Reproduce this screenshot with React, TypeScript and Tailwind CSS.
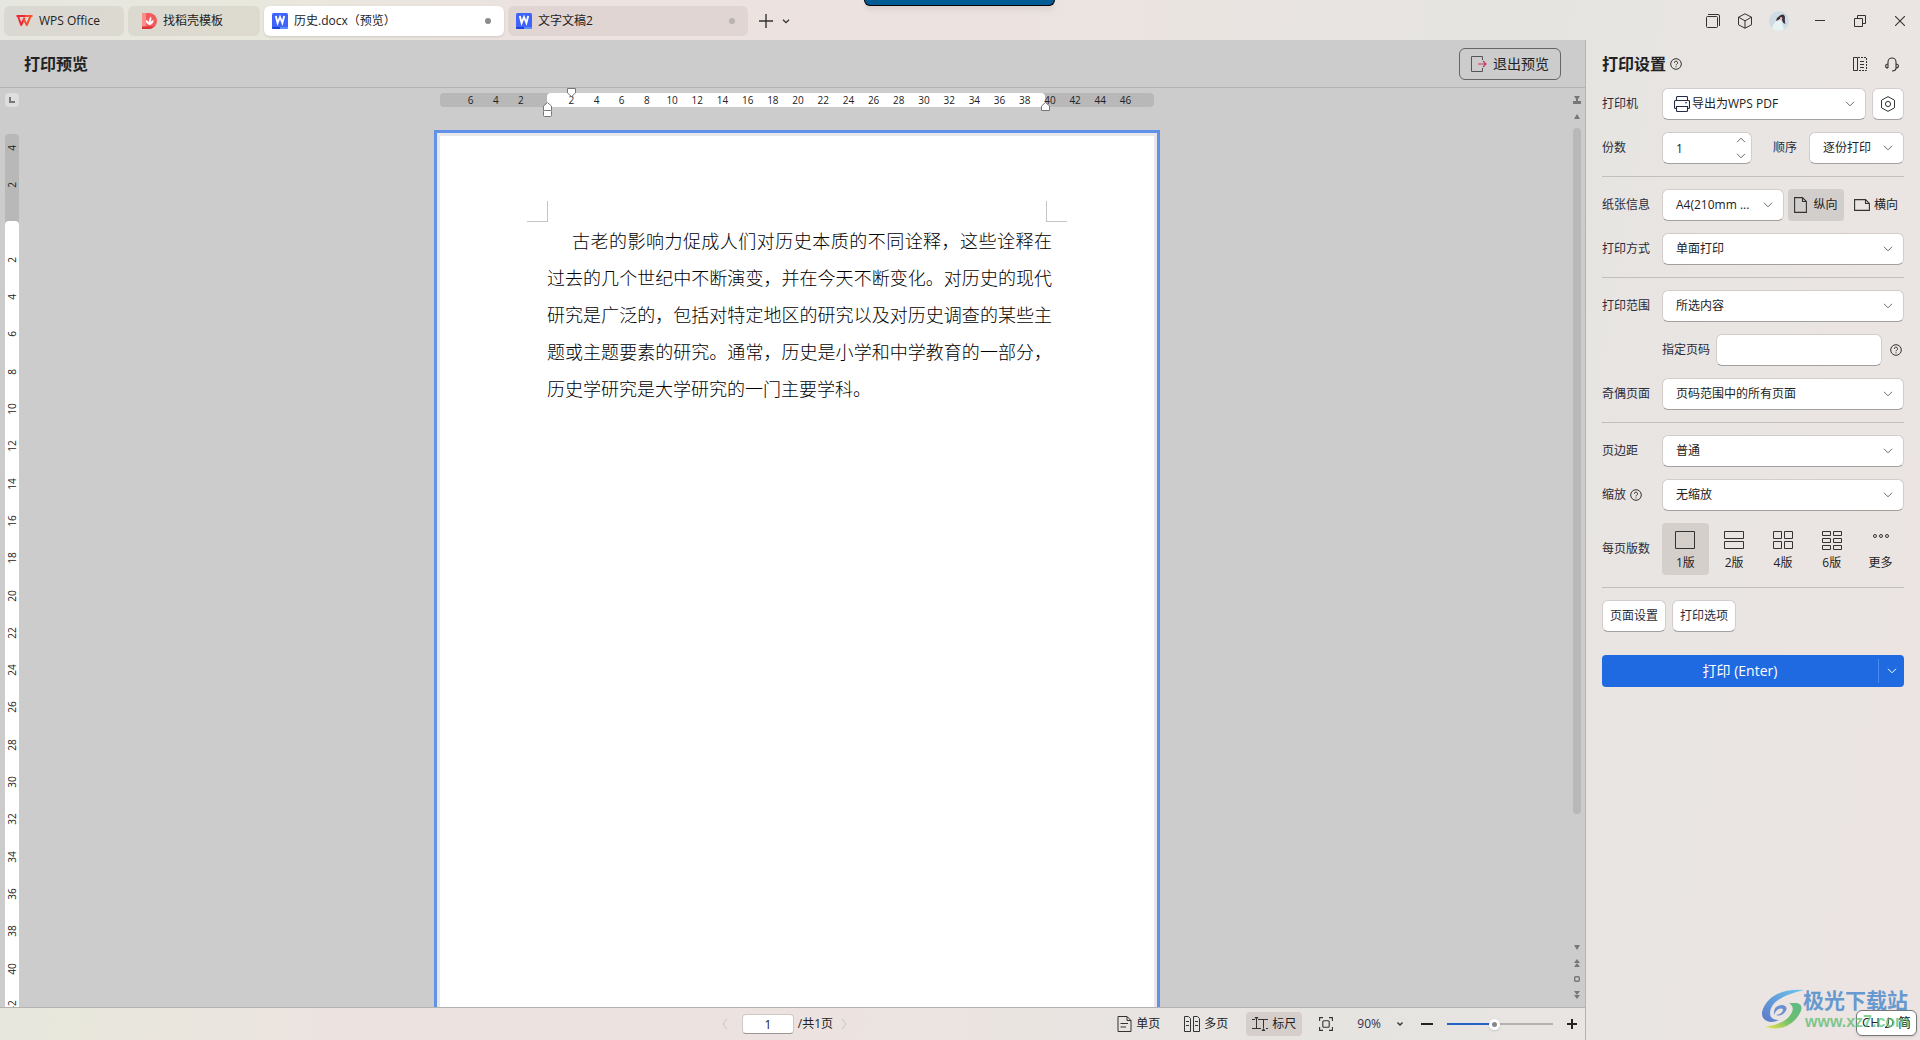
import { ReactNode, useState } from "react";
import clsx from "clsx";

const DownIcon = ({ className = "" }: { className?: string }) => (
    <svg viewBox="0 0 10 6" className={clsx("w-2.5 h-1.5", className)} fill="none" stroke="currentColor">
        <path d="M1 0.8 L5 4.8 L9 0.8" />
    </svg>
);

const HelpIcon = () => (
    <svg viewBox="0 0 12 12" className="w-3 h-3 shrink-0 text-[#333]" fill="none" stroke="currentColor">
        <circle cx="6" cy="6" r="5.3" />
        <path d="M4.4 4.8 a1.6 1.6 0 1 1 2.3 1.4 q-0.7 0.3 -0.7 1.1" />
        <path d="M6 8.3 v1" />
    </svg>
);

const WordIcon = () => (
    <svg viewBox="0 0 16 16" className="w-4 h-4 shrink-0">
        <rect width="16" height="16" rx="1.5" fill="#3f63fb" />
        <path d="M0 14 h8 v2 h-6.5 a1.5 1.5 0 0 1 -1.5 -1.5 z" fill="#1645d8" />
        <path d="M8 14 h8 v0.5 a1.5 1.5 0 0 1 -1.5 1.5 h-6.5 z" fill="#5b8dff" />
        <path d="M3.8 3 L5.6 10 L8 4 L10.4 10 L12.2 3" fill="none" stroke="#fff" strokeWidth="1.9" />
    </svg>
);

interface TabProps {
    icon: ReactNode;
    title: string;
    className?: string;
    active?: boolean;
    dot?: boolean;
}

const Tab = ({ icon, title, className = "", active = false, dot = false }: TabProps) => (
    <button
        className={clsx(
            "h-[30px] rounded-md flex items-center gap-1.5 text-xs",
            active ? "bg-white shadow-sm" : "bg-[#78645a]/10",
            className
        )}
    >
        {icon}
        <span className="whitespace-nowrap">{title}</span>
        {dot && <span className={clsx("ml-auto w-1.5 h-1.5 rounded-full", active ? "bg-[#8c8c8c]" : "bg-[#b9b3b1]")} />}
    </button>
);

const TitleBar = () => (
    <header className="relative h-10 shrink-0 flex items-center pl-1 pt-0.5 gap-1">
        <Tab
            title="WPS Office"
            className="w-[120px] pl-3"
            icon={
                <svg viewBox="0 0 17 12" className="w-[17px] h-3" fill="none" strokeWidth="2">
                    <path d="M0.5 1 H9 M2 1 L5.2 10 L8.6 2.6" stroke="#ee2737" strokeLinejoin="round" />
                    <path d="M7.4 3.4 L10.8 10 L14.6 1 M9 1 H16.5" stroke="#f8502c" strokeLinejoin="round" />
                </svg>
            }
        />
        <Tab
            title="找稻壳模板"
            className="w-[132px] pl-3.5"
            icon={
                <svg viewBox="0 0 15 16" className="w-[15px] h-4">
                    <path d="M0 0 H7 a8 8 0 0 1 0 16 H0 z" fill="#f25a5d" />
                    <path d="M0 0 H4 V16 H0 z" fill="#f98f8d" />
                    <path d="M0 13.5 H12 a8 8 0 0 1 -5 2.5 H0 z" fill="#dd3439" />
                    <path d="M7.5 12 Q3.4 10.5 4 7 Q6.6 7.8 7 9.6 Q6.6 5.4 9 3.4 Q10.2 6 8.6 9 Q9.4 7.4 11.6 7 Q11.6 11.2 7.5 12" fill="#fff" />
                </svg>
            }
        />
        <Tab title="历史.docx（预览）" className="w-60 pl-2 pr-[13px]" icon={<WordIcon />} active dot />
        <Tab title="文字文稿2" className="w-60 pl-2 pr-[13px]" icon={<WordIcon />} dot />
        <button aria-label="新建" className="w-7 h-7 flex items-center justify-center">
            <svg viewBox="0 0 14 14" className="w-3.5 h-3.5" stroke="#333" strokeWidth="1.4"><path d="M7 0 V14 M0 7 H14" /></svg>
        </button>
        <button aria-label="更多标签" className="h-7 -ml-0.5 flex items-center">
            <svg viewBox="0 0 8 5" className="w-2 h-[5px]" fill="none" stroke="#333" strokeWidth="1.3"><path d="M1 0.7 L4 3.7 L7 0.7" /></svg>
        </button>

        <div className="absolute top-0 left-[45%] w-[191px] h-1.5 rounded-b-md bg-[#005a94] border border-t-0 border-black shadow-md" />

        <div className="ml-auto flex items-center text-[#333]">
            <button aria-label="窗口" className="w-8 h-8 flex items-center justify-center">
                <svg viewBox="0 0 14 14" className="w-3.5 h-3.5" fill="none" stroke="currentColor">
                    <rect x="0.5" y="2.5" width="11" height="11" rx="1" />
                    <path d="M2 0.5 H12 a1.5 1.5 0 0 1 1.5 1.5 V12" />
                </svg>
            </button>
            <button aria-label="应用" className="w-8 h-8 flex items-center justify-center">
                <svg viewBox="0 0 16 16" className="w-4 h-4" fill="none" stroke="currentColor" strokeLinejoin="round">
                    <path d="M8 0.8 L14.5 4.2 V11.8 L8 15.2 L1.5 11.8 V4.2 z M1.5 4.2 L8 7.8 L14.5 4.2 M8 7.8 V15.2" />
                </svg>
            </button>
            <button aria-label="账号" className="w-[39px] h-8 flex items-center pl-2">
                <svg viewBox="0 0 20 20" className="w-5 h-5">
                    <circle cx="10" cy="10" r="10" fill="#cfdce4" />
                    <path d="M3 17 Q6 9 12 9 L15 18.6 A10 10 0 0 1 3 17" fill="#e8f3f4" />
                    <path d="M11 4.6 Q15 2 16 6 Q15.6 10 16.4 13 L14.4 12 Q13 10 12.6 7 Q11 8 7 10 Q8 6 11 4.6" fill="#39323e" />
                    <path d="M11 6.4 Q13.4 5 13.4 7.6 Q12.6 9.8 11 9 z" fill="#e9bfae" />
                </svg>
            </button>
            <button aria-label="最小化" className="w-10 h-8 flex items-center justify-center">
                <svg viewBox="0 0 10 10" className="w-2.5 h-2.5" stroke="currentColor"><path d="M0 4.5 H10" /></svg>
            </button>
            <button aria-label="还原" className="w-10 h-8 flex items-center justify-center">
                <svg viewBox="0 0 12 12" className="w-3 h-3" fill="none" stroke="currentColor"><path d="M0.5 3.5 H8.5 V11.5 H0.5 z M3.5 3.5 V0.5 H11.5 V8.5 H8.5" /></svg>
            </button>
            <button aria-label="关闭" className="w-10 h-8 flex items-center justify-center">
                <svg viewBox="0 0 10 10" className="w-2.5 h-2.5" stroke="currentColor" strokeWidth="1.1"><path d="M0 0 L10 10 M10 0 L0 10" /></svg>
            </button>
        </div>
    </header>
);

const hMarks = Array.from({ length: 27 }, (_, i) => i * 2 - 6);
const vMarks = Array.from({ length: 24 }, (_, i) => i * 2 - 4);

const HorizontalRuler = () => (
    <div className="relative w-[714px] h-3.5 mt-[5px] shrink-0 rounded bg-[#b8b8b8]">
        <div className="absolute inset-y-0 left-[107px] w-[498px] rounded bg-white" />
        <div className="relative h-full flex items-center pl-[18px] pr-4 text-[10px] leading-none">
            {hMarks.map((n) => (
                <span key={n} className="flex-1 text-center">{n !== 0 && Math.abs(n)}</span>
            ))}
        </div>
        <svg viewBox="0 0 9 9" className="absolute -top-[5px] left-[127px] w-[9px] h-[9px]" fill="#fff" stroke="#777">
            <path d="M0.5 0.5 H8.5 V5 L4.5 8.5 L0.5 5 z" />
        </svg>
        <svg viewBox="0 0 9 15" className="absolute top-[9px] left-[103px] w-[9px] h-[15px]" fill="#fff" stroke="#777">
            <path d="M0.5 8.5 V4 L4.5 0.5 L8.5 4 V8.5 z" />
            <rect x="0.5" y="8.5" width="8" height="6" rx="1" />
        </svg>
        <svg viewBox="0 0 9 9" className="absolute top-[9px] left-[601px] w-[9px] h-[9px]" fill="#fff" stroke="#777">
            <path d="M0.5 8.5 V4 L4.5 0.5 L8.5 4 V8.5 z" />
        </svg>
    </div>
);

const VerticalRuler = () => (
    <div className="w-6 shrink-0 flex flex-col pl-[5px] pt-[5px] overflow-hidden">
        <div className="w-3.5 h-3.5 shrink-0 rounded bg-[#dedede] flex items-center justify-center">
            <svg viewBox="0 0 6 6" className="w-1.5 h-1.5" fill="none" stroke="#777" strokeWidth="2"><path d="M1 0 V5 H6" /></svg>
        </div>
        <div className="relative w-3.5 mt-[27px] flex-1 min-h-0 rounded-t bg-[#b8b8b8]">
            <div className="absolute top-[87px] bottom-0 inset-x-0 rounded-t bg-white" />
            <div className="relative h-[878px] pt-2 flex flex-col justify-between items-center text-[10px] leading-none">
                {vMarks.map((n) => (
                    <span key={n} className="h-3 w-3 flex items-center justify-center -rotate-90">{n !== 0 && Math.abs(n)}</span>
                ))}
            </div>
        </div>
    </div>
);

const PagePreview = () => (
    <article className="w-[726px] flex-1 mt-[23px] border-[3px] border-b-0 border-[#6191e8] bg-[#e8e8e8] p-[3px] pb-0">
        <div className="h-full bg-white pt-[65px]">
            <div className="flex justify-between px-[87px]">
                <div className="w-[21px] h-[21px] border-r border-b border-[#c4c4c4]" />
                <div className="w-[21px] h-[21px] border-l border-b border-[#c4c4c4]" />
            </div>
            <p className="pl-[107px] pr-[102px] indent-[25px] text-justify text-lg leading-[37px] font-light text-black font-['Noto_Sans_CJK_SC',sans-serif]">
                古老的影响力促成人们对历史本质的不同诠释，这些诠释在过去的几个世纪中不断演变，并在今天不断变化。对历史的现代研究是广泛的，包括对特定地区的研究以及对历史调查的某些主题或主题要素的研究。通常，历史是小学和中学教育的一部分，历史学研究是大学研究的一门主要学科。
            </p>
        </div>
    </article>
);

const ScrollColumn = () => (
    <div className="w-[15px] pr-0.5 shrink-0 flex flex-col items-center pt-2 text-[#777]">
        <svg viewBox="0 0 8 8" className="w-2 h-2" fill="currentColor"><path d="M1 0 H7 L5 3 H3 z M3 3 H5 V5 H8 V8 H0 V5 H3 z" /></svg>
        <svg viewBox="0 0 6 5" className="w-1.5 h-[5px] mt-2.5" fill="currentColor"><path d="M3 0 L6 5 H0 z" /></svg>
        <div className="w-2 mt-[9px] h-[686px] rounded-full bg-[#b8b8b8]" />
        <div className="mt-auto mb-2 flex flex-col items-center gap-[9px]">
            <svg viewBox="0 0 6 5" className="w-1.5 h-[5px]" fill="currentColor"><path d="M3 5 L6 0 H0 z" /></svg>
            <svg viewBox="0 0 6 8" className="w-1.5 h-2" fill="currentColor"><path d="M3 0 L6 4 H0 z M3 4 L6 8 H0 z" /></svg>
            <svg viewBox="0 0 6 6" className="w-1.5 h-1.5" fill="none" stroke="currentColor" strokeWidth="1.4"><rect x="0.7" y="0.7" width="4.6" height="4.6" rx="1" /></svg>
            <svg viewBox="0 0 6 8" className="w-1.5 h-2" fill="currentColor"><path d="M3 8 L6 4 H0 z M3 4 L6 0 H0 z" /></svg>
        </div>
    </div>
);

const StatusBar = () => {
    const [page, setPage] = useState("1");

    return (
        <footer className="h-[33px] shrink-0 border-t border-[#b3b3b3] grid grid-cols-[1fr_auto_1fr] items-center text-xs">
            <span />
            <div className="flex items-center gap-1 pr-3.5">
                <button aria-label="上一页" className="w-3 mr-1">
                    <svg viewBox="0 0 6 12" className="w-1.5 h-3" fill="none" stroke="#c6c2c2"><path d="M5 1 L1 6 L5 11" /></svg>
                </button>
                <input
                    aria-label="页码"
                    value={page}
                    onChange={(e) => setPage(e.target.value)}
                    className="w-[52px] h-5 rounded bg-white border border-[#cfc9c8] border-b-[#9a9696] text-center"
                />
                <span>/共1页</span>
                <button aria-label="下一页" className="w-3 pl-1">
                    <svg viewBox="0 0 6 12" className="w-1.5 h-3" fill="none" stroke="#c6c2c2"><path d="M1 1 L5 6 L1 11" /></svg>
                </button>
            </div>
            <div className="flex items-center justify-end pr-2">
                <button className="h-6 flex items-center gap-1 px-1.5 mr-3">
                    <svg viewBox="0 0 15 16" className="w-[15px] h-4" fill="none" stroke="#333">
                        <path d="M1 0.5 H10 L14 4.5 V15.5 H1 z M10 0.5 V4.5 H14 M3.5 7.5 H11 M3.5 11 H9" />
                    </svg>
                    单页
                </button>
                <button className="h-6 flex items-center gap-1 px-1.5 mr-3">
                    <svg viewBox="0 0 16 16" className="w-4 h-4" fill="none" stroke="#333">
                        <path d="M0.5 0.5 H4.5 L6.5 2.5 V15.5 H0.5 z M9.5 0.5 H13.5 L15.5 2.5 V15.5 H9.5 z M2 5.5 H5 M2 9.5 H5 M11 5.5 H14 M11 9.5 H14" />
                    </svg>
                    多页
                </button>
                <button className="h-6 flex items-center gap-1 px-1.5 mr-[17px] rounded bg-[#d5cecb]">
                    <svg viewBox="0 0 16 14" className="w-4 h-3.5" fill="none" stroke="#333">
                        <path d="M0 2.5 H3 M6 2.5 H16 M4.5 2 V11 M0 11.5 H9 M11.5 2.5 V11 M14 11.5 H16" />
                        <path d="M2.5 0 H6.5 L4.5 3 z M9.5 14 H13.5 L11.5 11 z" fill="#333" stroke="none" />
                    </svg>
                    标尺
                </button>
                <button aria-label="全屏" className="mr-6">
                    <svg viewBox="0 0 14 14" className="w-3.5 h-3.5 block" fill="none" stroke="#333" strokeWidth="1.1">
                        <path d="M0.6 4 V0.6 H4 M10 0.6 H13.4 V4 M13.4 10 V13.4 H10 M4 13.4 H0.6 V10" />
                        <rect x="3.8" y="3.8" width="6.4" height="6.4" rx="1" />
                    </svg>
                </button>
                <button className="flex items-center gap-4 text-[#34304a]">
                    90%
                    <svg viewBox="0 0 6 4" className="w-1.5 h-1" fill="none" stroke="#333" strokeWidth="1.4"><path d="M0.5 0.5 L3 3 L5.5 0.5" /></svg>
                </button>
                <button aria-label="缩小" className="ml-[18px] mr-3.5">
                    <svg viewBox="0 0 12 12" className="w-3 h-3 block" stroke="#222" strokeWidth="2"><path d="M0 6 H12" /></svg>
                </button>
                <input
                    type="range"
                    aria-label="显示比例"
                    defaultValue={44}
                    className="w-[106px] h-3 appearance-none bg-transparent bg-[linear-gradient(90deg,#2262c6_44%,#b9b1ae_44%)] bg-[length:100%_2px] bg-no-repeat bg-center [&::-webkit-slider-thumb]:appearance-none [&::-webkit-slider-thumb]:w-[11px] [&::-webkit-slider-thumb]:h-[11px] [&::-webkit-slider-thumb]:rounded-full [&::-webkit-slider-thumb]:border-[3px] [&::-webkit-slider-thumb]:border-white [&::-webkit-slider-thumb]:bg-[#888] [&::-webkit-slider-thumb]:shadow"
                />
                <button aria-label="放大" className="ml-3.5">
                    <svg viewBox="0 0 10 10" className="w-2.5 h-2.5 block" stroke="#222" strokeWidth="2"><path d="M0 5 H10 M5 0 V10" /></svg>
                </button>
            </div>
        </footer>
    );
};

const fieldStyle = "h-8 rounded-md bg-white border border-[#d2cdcb] border-b-[#a3a09f] text-xs";

interface SelectFieldProps {
    id: string;
    options: string[];
    className?: string;
    icon?: ReactNode;
}

const SelectField = ({ id, options, className = "flex-1", icon }: SelectFieldProps) => (
    <div className={clsx("relative min-w-0", className)}>
        {icon && <span className="absolute left-3 inset-y-0 flex items-center">{icon}</span>}
        <select id={id} className={clsx(fieldStyle, "w-full appearance-none pr-6 text-ellipsis", icon ? "pl-[29px]" : "pl-[13px]")}>
            {options.map((option) => <option key={option}>{option}</option>)}
        </select>
        <DownIcon className="absolute right-[11px] top-[13px] text-[#666] pointer-events-none" />
    </div>
);

const Row = ({ label, htmlFor, help = false, children }: { label: string; htmlFor?: string; help?: boolean; children: ReactNode }) => (
    <div className="flex items-center">
        <label htmlFor={htmlFor} className="w-[60px] shrink-0 flex items-center gap-1 text-[#2b2b3a]">
            {label}
            {help && <HelpIcon />}
        </label>
        {children}
    </div>
);

const Divider = () => <hr className="border-[#c3bfbd]" />;

const layouts = [
    { label: "1版", path: "M0.5 0.5 H19.5 V17.5 H0.5 z" },
    { label: "2版", path: "M0.5 0.5 H19.5 V7.5 H0.5 z M0.5 10.5 H19.5 V17.5 H0.5 z" },
    { label: "4版", path: "M0.5 0.5 H8.5 V7.5 H0.5 z M11.5 0.5 H19.5 V7.5 H11.5 z M0.5 10.5 H8.5 V17.5 H0.5 z M11.5 10.5 H19.5 V17.5 H11.5 z" },
    { label: "6版", path: "M0.5 0.5 H8.5 V4.5 H0.5 z M11.5 0.5 H19.5 V4.5 H11.5 z M0.5 7.5 H8.5 V11.5 H0.5 z M11.5 7.5 H19.5 V11.5 H11.5 z M0.5 14.5 H8.5 V18.5 H0.5 z M11.5 14.5 H19.5 V18.5 H11.5 z" },
    { label: "更多", path: "M2.5 5 a1.5 1.5 0 1 0 3 0 a1.5 1.5 0 1 0 -3 0 M8.5 5 a1.5 1.5 0 1 0 3 0 a1.5 1.5 0 1 0 -3 0 M14.5 5 a1.5 1.5 0 1 0 3 0 a1.5 1.5 0 1 0 -3 0" },
];

const PrintSettings = () => {
    const [layout, setLayout] = useState("1版");
    const [copies, setCopies] = useState(1);

    return (
        <aside className="relative w-[334px] shrink-0 px-4 text-xs">
            <div className="h-12 flex items-center">
                <h2 className="text-base font-bold mr-1">打印设置</h2>
                <HelpIcon />
                <button aria-label="面板" className="w-8 h-8 ml-auto flex items-center justify-center">
                    <svg viewBox="0 0 14 14" className="w-3.5 h-3.5" fill="none" stroke="#333">
                        <path d="M0.5 0.5 H4.5 V13.5 H0.5 z M7 4.5 H11 M7 7.5 H11 M7 10.5 H11" />
                        <path d="M5 0.5 H13.5 V13.5 H5" strokeDasharray="2 1" />
                    </svg>
                </button>
                <button aria-label="客服" className="w-8 h-8 -mr-1 flex items-center justify-center">
                    <svg viewBox="0 0 14 15" className="w-3.5 h-[15px]" fill="none" stroke="#333" strokeWidth="1.1">
                        <path d="M3 11 V5 a4 4 0 0 1 8 0 V11 q0 3 -4 3 M3 7 q-2.4 0 -2.4 2 q0 2 2.4 2 M11 7 q2.4 0 2.4 2 q0 2 -2.4 2" />
                    </svg>
                </button>
            </div>

            <div className="flex flex-col gap-3">
                <Row label="打印机" htmlFor="printer">
                    <SelectField
                        id="printer"
                        options={["导出为WPS PDF"]}
                        icon={
                            <svg viewBox="0 0 16 16" className="w-4 h-4" fill="none" stroke="#262b44" strokeWidth="1.1">
                                <path d="M2.5 4.5 V1.5 a1 1 0 0 1 1 -1 H12.5 a1 1 0 0 1 1 1 V4.5 M2.5 12.5 H1.5 a1 1 0 0 1 -1 -1 V5.5 a1 1 0 0 1 1 -1 H14.5 a1 1 0 0 1 1 1 V11.5 a1 1 0 0 1 -1 1 H13.5" />
                                <path d="M2.5 10.5 H13.5 V14.5 a1 1 0 0 1 -1 1 H3.5 a1 1 0 0 1 -1 -1 z M11 6.8 H13" />
                            </svg>
                        }
                    />
                    <button aria-label="打印机属性" className={clsx(fieldStyle, "w-8 ml-1.5 flex items-center justify-center")}>
                        <svg viewBox="0 0 16 16" className="w-4 h-4" fill="none" stroke="#333">
                            <path d="M8 0.6 L14.5 4.2 V11.8 L8 15.4 L1.5 11.8 V4.2 z" strokeLinejoin="round" />
                            <circle cx="8" cy="8" r="2.6" />
                        </svg>
                    </button>
                </Row>
                <Row label="份数" htmlFor="copies">
                    <div className="relative w-[90px]">
                        <input
                            id="copies"
                            value={copies}
                            onChange={(e) => setCopies(Number(e.target.value) || 1)}
                            className={clsx(fieldStyle, "w-full pl-[13px]")}
                        />
                        <div className="absolute right-1.5 inset-y-0 flex flex-col justify-center gap-1 text-[#666]">
                            <button aria-label="增加" onClick={() => setCopies(copies + 1)} className="w-2.5 h-3 flex items-center"><DownIcon className="rotate-180" /></button>
                            <button aria-label="减少" onClick={() => setCopies(Math.max(1, copies - 1))} className="w-2.5 h-3 flex items-center"><DownIcon /></button>
                        </div>
                    </div>
                    <label htmlFor="order" className="ml-auto mr-3 text-[#2b2b3a]">顺序</label>
                    <SelectField id="order" options={["逐份打印", "逐页打印"]} className="w-[95px]" />
                </Row>
                <Divider />
                <Row label="纸张信息" htmlFor="paper">
                    <SelectField id="paper" options={["A4(210mm ..."]} className="w-[122px]" />
                    <button className="h-8 w-14 ml-1 rounded bg-[#d2cecb] flex items-center justify-center gap-1.5">
                        <svg viewBox="0 0 13 16" className="w-[13px] h-4" fill="none" stroke="#333" strokeWidth="1.1"><path d="M0.6 0.6 H8.5 L12.4 4.5 V15.4 H0.6 z M8.5 0.6 V4.5 H12.4" /></svg>
                        纵向
                    </button>
                    <button className="h-8 flex-1 flex items-center justify-end pr-1.5 gap-1">
                        <svg viewBox="0 0 16 12" className="w-4 h-3" fill="none" stroke="#333" strokeWidth="1.1"><path d="M0.6 0.6 H11.5 L15.4 4.5 V11.4 H0.6 z M11.5 0.6 V4.5 H15.4" /></svg>
                        横向
                    </button>
                </Row>
                <Row label="打印方式" htmlFor="duplex">
                    <SelectField id="duplex" options={["单面打印", "双面打印"]} />
                </Row>
                <Divider />
                <Row label="打印范围" htmlFor="range">
                    <SelectField id="range" options={["所选内容", "整个文档"]} />
                </Row>
                <div className="flex items-center pl-[60px] pr-0.5">
                    <label htmlFor="pages" className="mr-1.5 shrink-0 text-[#2b2b3a]">指定页码</label>
                    <input id="pages" className={clsx(fieldStyle, "flex-1 min-w-0 px-3 mr-2")} />
                    <HelpIcon />
                </div>
                <Row label="奇偶页面" htmlFor="parity">
                    <SelectField id="parity" options={["页码范围中的所有页面", "奇数页", "偶数页"]} />
                </Row>
                <Divider />
                <Row label="页边距" htmlFor="margin">
                    <SelectField id="margin" options={["普通", "窄", "宽"]} />
                </Row>
                <Row label="缩放" htmlFor="scale" help>
                    <SelectField id="scale" options={["无缩放"]} />
                </Row>
                <Row label="每页版数">
                    <div className="flex-1 flex gap-0.5">
                        {layouts.map((item) => (
                            <button
                                key={item.label}
                                onClick={() => setLayout(item.label)}
                                className={clsx("flex-1 h-[52px] rounded flex flex-col items-center pt-2 gap-[5px] leading-4", layout === item.label && "bg-[#d5cfcc]")}
                            >
                                <svg viewBox="0 0 20 19" className="w-5 h-[19px] shrink-0" fill="none" stroke="#333">
                                    <path d={item.path} />
                                </svg>
                                {item.label}
                            </button>
                        ))}
                    </div>
                </Row>
                <Divider />
                <div className="flex gap-1.5">
                    <button className={clsx(fieldStyle, "w-16 text-[#2b2b3a]")}>页面设置</button>
                    <button className={clsx(fieldStyle, "w-16 text-[#2b2b3a]")}>打印选项</button>
                </div>
            </div>

            <div className="h-8 mt-[23px] flex items-center rounded bg-[#1f6ae1] text-white">
                <button className="flex-1 text-sm">打印 (Enter)</button>
                <button aria-label="更多打印选项" className="w-[26px] h-6 border-l border-[#4a8bf0] flex items-center justify-center">
                    <DownIcon />
                </button>
            </div>

            <div className="absolute bottom-1 right-[3px] w-[156px] h-12">
                <svg viewBox="0 0 44 42" className="absolute left-0 top-0 w-11 h-[42px]">
                    <defs>
                        <linearGradient id="swirlBlue" x1="0" y1="1" x2="1" y2="0">
                            <stop offset="0" stopColor="#5b78c8" />
                            <stop offset="1" stopColor="#6cc6ee" />
                        </linearGradient>
                        <linearGradient id="swirlGreen" x1="0" y1="1" x2="1" y2="0">
                            <stop offset="0" stopColor="#f0e24c" />
                            <stop offset="0.5" stopColor="#6cbf6d" />
                            <stop offset="1" stopColor="#5fb98a" />
                        </linearGradient>
                    </defs>
                    <path d="M43 2 Q18 0 6 14 Q-3 26 4 32 Q10 36 18 32 Q9 32 9 25 Q9 10 43 2" fill="url(#swirlBlue)" />
                    <path d="M13 27 Q12 17 22 17 Q28 19 24 24 Q20 29 15 27 Q22 26 22 21 Q16 19 13 27" fill="#6a8fd0" />
                    <path d="M28 15 Q36 20 27 30 Q19 37 4 39 Q22 44 34 32 Q46 18 36 15 z" fill="url(#swirlGreen)" />
                </svg>
                <span className="absolute left-[42px] top-0 text-[21px] leading-6 font-bold text-[#6699d0] whitespace-nowrap">极光下载站</span>
                <div className="absolute right-0 bottom-0 w-[61px] h-[26px] rounded-md border border-[#777] bg-white shadow flex items-center justify-center gap-1 text-[13px]">
                    <span>CH</span>
                    <svg viewBox="0 0 10 12" className="w-2.5 h-3" fill="none" stroke="#333"><path d="M4 1 Q9 2 9 6 Q8 11 1 10.5 Q6 8 4 1" /></svg>
                    <span>简</span>
                </div>
                <span className="absolute left-11 top-6 text-base leading-5 font-bold text-[#4fb864]/70 font-['Liberation_Sans',sans-serif]">www.xz7.com</span>
            </div>
        </aside>
    );
};

export default function App() {
    return (
        <div className="h-screen flex flex-col overflow-hidden text-[#222] bg-[#ebe4e1] bg-[linear-gradient(100deg,#e6e6e0_0%,#e9e8dd_12%,#ece2e0_26%,#ece3e0_48%,#e5e4e1_72%,#e9e5e2_86%,#ece4e2_100%)] font-['Open_Sans','Noto_Sans_CJK_SC',sans-serif]">
            <TitleBar />
            <div className="flex-1 min-h-0 flex">
                <div className="flex-1 min-w-0 flex flex-col border-r border-[#b3b3b3]">
                    <div className="h-12 shrink-0 px-6 flex items-center justify-between bg-[#ccc] border-b border-[#b3b3b3]">
                        <h1 className="text-base font-bold">打印预览</h1>
                        <button className="h-8 w-[102px] rounded-md border border-[#666] flex items-center justify-center gap-1.5 text-sm whitespace-nowrap">
                            <svg viewBox="0 0 16 16" className="w-4 h-4 shrink-0" fill="none">
                                <path d="M11.5 4 V0.5 H0.5 V15.5 H11.5 V12" stroke="#555" />
                                <path d="M7 8 H15 M12 5 L15 8 L12 11" stroke="#c8385c" strokeWidth="1.2" />
                            </svg>
                            退出预览
                        </button>
                    </div>
                    <main className="flex-1 min-h-0 flex bg-[#ccc]">
                        <VerticalRuler />
                        <div className="flex-1 min-w-0 flex flex-col items-center">
                            <HorizontalRuler />
                            <PagePreview />
                        </div>
                        <ScrollColumn />
                    </main>
                    <StatusBar />
                </div>
                <PrintSettings />
            </div>
        </div>
    );
}
